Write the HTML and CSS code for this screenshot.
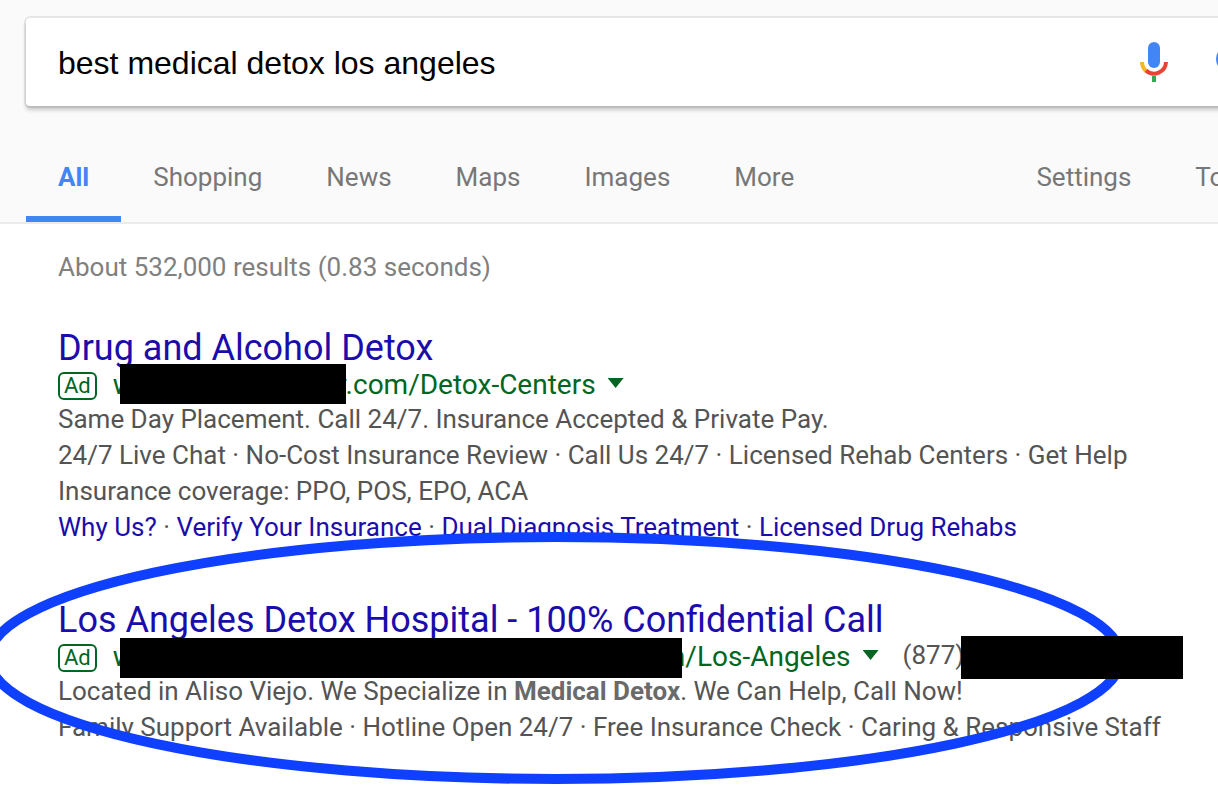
FILE: index.html
```html
<!DOCTYPE html>
<html lang="en">
<head>
<meta charset="utf-8">
<title>best medical detox los angeles - Search</title>
<link rel="stylesheet" href="styles.css">
</head>
<body>
<header class="header">
  <form class="search">
    <input class="search-input" type="text" aria-label="Search" value="best medical detox los angeles">
    <button class="icon-button" type="button" aria-label="Search by voice">
      <svg class="icon" width="28" height="40" viewBox="0 0 28 40" aria-hidden="true">
        <rect x="8" y="0" width="12" height="26" rx="6" fill="#4285f4"/>
        <path d="M2 20a12 12 0 0 0 4.500 9.300" fill="none" stroke="#f6b727" stroke-width="4"/>
        <path d="M6 28.500A12 12 0 0 0 26 20" fill="none" stroke="#ea4335" stroke-width="4"/>
        <rect x="12" y="34" width="4" height="6" fill="#34a853"/>
      </svg>
    </button>
    <button class="icon-button" type="submit" aria-label="Search">
      <svg class="icon" width="36" height="36" viewBox="0 0 36 36" aria-hidden="true">
        <circle cx="13" cy="15" r="11" fill="none" stroke="#4285f4" stroke-width="4"/>
        <path d="M21 23l12 12" stroke="#4285f4" stroke-width="4"/>
      </svg>
    </button>
  </form>
  <nav class="tabs">
    <a class="tab tab-active" href="#">All</a>
    <a class="tab" href="#">Shopping</a>
    <a class="tab" href="#">News</a>
    <a class="tab" href="#">Maps</a>
    <a class="tab" href="#">Images</a>
    <a class="tab" href="#">More</a>
    <div class="tools">
      <a class="tab" href="#">Settings</a>
      <a class="tab" href="#">Tools</a>
    </div>
  </nav>
</header>
<main class="results">
  <p class="stats">About 532,000 results (0.83 seconds)</p>
  <article class="ad">
    <h3 class="title"><a href="#">Drug and Alcohol Detox</a></h3>
    <div class="url">
      <span class="badge">Ad</span>
      <span>w</span><span class="bar bar-short"></span><span class="tuck-narrow">y.com/Detox-Centers</span>
      <button class="caret" type="button" aria-label="More about this ad"></button>
    </div>
    <p class="line">Same Day Placement. Call 24/7. Insurance Accepted &amp; Private Pay.</p>
    <p class="line">24/7 Live Chat · No-Cost Insurance Review · Call Us 24/7 · Licensed Rehab Centers · Get Help</p>
    <p class="line">Insurance coverage: PPO, POS, EPO, ACA</p>
    <p class="line"><a href="#">Why Us?</a> · <a href="#">Verify Your Insurance</a> · <a href="#">Dual Diagnosis Treatment</a> · <a href="#">Licensed Drug Rehabs</a></p>
  </article>
  <article class="ad">
    <h3 class="title"><a href="#">Los Angeles Detox Hospital - 100% Confidential Call</a></h3>
    <div class="url">
      <span class="badge">Ad</span>
      <span>w</span><span class="bar bar-long"></span><span class="tuck-wide">m/Los-Angeles</span>
      <button class="caret" type="button" aria-label="More about this ad"></button>
      <span class="phone">(877)</span><span class="bar bar-phone"></span>
    </div>
    <p class="line">Located in Aliso Viejo. We Specialize in <b>Medical Detox</b>. We Can Help, Call Now!</p>
    <p class="line">Family Support Available · Hotline Open 24/7 · Free Insurance Check · Caring &amp; Responsive Staff</p>
    <svg class="ring" width="1142" height="254" viewBox="0 0 1142 254" aria-hidden="true">
      <ellipse cx="571" cy="127" rx="566" ry="121" fill="none" stroke="#1040ff" stroke-width="10"/>
    </svg>
  </article>
</main>
</body>
</html>
```
FILE: styles.css
```css
* {
  box-sizing: border-box;
}

body {
  margin: 0;
  background: #fff;
  color: #545454;
  font-family: Roboto, Arial, sans-serif;
  font-size: 26px;
  line-height: 36px;
}

a {
  color: #1a0dab;
  text-decoration: none;
}

.header {
  padding: 18px 0 0 26px;
  background: #fafafa;
  border-bottom: 2px solid #ebebeb;
  overflow: hidden;
}

.search {
  display: flex;
  align-items: center;
  gap: 48px;
  height: 88px;
  margin-right: -72px;
  padding: 0 38px 0 32px;
  background: #fff;
  border-radius: 4px;
  box-shadow: 0 0 0 2px rgba(0, 0, 0, 0.08), 0 4px 4px rgba(0, 0, 0, 0.2);
}

.search-input {
  flex: 1;
  min-width: 0;
  padding: 2px 0 0;
  border: 0;
  outline: 0;
  background: none;
  color: #000;
  font: 32px/40px "Liberation Sans", Arial, sans-serif;
}

.icon-button {
  padding: 0;
  border: 0;
  background: none;
}

.icon {
  display: block;
}

.tabs {
  display: flex;
  margin-top: 26px;
}

.tab {
  padding: 27px 32px 21px;
  border-bottom: 6px solid transparent;
  color: #777;
}

.tab-active {
  border-color: #4285f4;
  color: #4285f4;
  font-weight: 700;
}

.tools {
  display: flex;
  margin-left: auto;
  margin-right: -73px;
}

.results {
  min-height: 566px;
  padding: 25px 32px 24px 58px;
  overflow: hidden;
}

.stats,
.line,
.title {
  margin: 0;
}

.line {
  white-space: nowrap;
}

.stats {
  color: #808080;
}

.ad {
  position: relative;
  margin-top: 42px;
}

.ad + .ad {
  margin-top: 54px;
}

.title {
  font-size: 36px;
  font-weight: 400;
  line-height: 42px;
  white-space: nowrap;
}

.url {
  display: flex;
  align-items: center;
  height: 32px;
  color: #006621;
  font-size: 28px;
  white-space: nowrap;
}

.badge {
  margin: 2px 16px 0 0;
  padding: 0 4px;
  border: 2px solid #006621;
  border-radius: 6px;
  font-size: 22px;
  line-height: 24px;
}

.bar {
  z-index: 2;
  flex: none;
  height: 40px;
  margin-left: -14px;
  background: #000;
}

.bar-short {
  width: 226px;
  margin-bottom: 2px;
}

.bar-long {
  width: 562px;
  margin-top: 2px;
}

.bar-phone {
  width: 222px;
  height: 43px;
  margin: 1px 0 0 -3px;
}

/* The address continues from behind its bar. */
.tuck-narrow {
  margin-left: -12px;
}

.tuck-wide {
  margin-left: -21px;
}

.caret {
  width: 16px;
  height: 10px;
  margin: 0 0 4px 12px;
  padding: 0;
  border: 0;
  background: #006621;
  clip-path: polygon(0 0, 100% 0, 50% 100%);
}

.phone {
  margin: 0 0 4px 24px;
  color: #545454;
  font-size: 26px;
}

b {
  color: #6a6a6a;
}

.ring {
  position: absolute;
  z-index: 1;
  top: -68px;
  left: -74px;
  pointer-events: none;
}
```
